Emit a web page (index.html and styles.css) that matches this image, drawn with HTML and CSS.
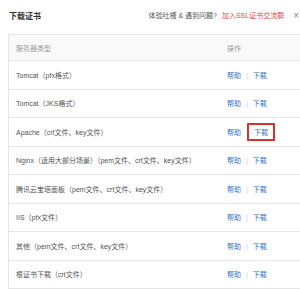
FILE: index.html
```html
<!DOCTYPE html>
<html lang="zh-CN">
<head>
  <meta charset="UTF-8" />
  <meta name="viewport" content="width=device-width, initial-scale=1.0" />
  <title>下载证书</title>
  <link rel="stylesheet" href="styles.css">
</head>
<body>

  <!-- 弹窗标题栏 -->
  <div class="dialog-head">
    <h2>下载证书</h2>
    <div class="feedback">
      <span>体验吐槽 &amp; 遇到问题?</span>
      <a class="join" href="#">加入SSL证书交流群</a>
    </div>
    <span class="close">×</span>
  </div>

  <!-- 证书下载列表 -->
  <table class="cert-table">
    <thead>
      <tr>
        <th>服务器类型</th>
        <th class="op">操作</th>
      </tr>
    </thead>
    <tbody>
      <tr><td>Tomcat（pfx格式）</td><td class="op"><a href="#">帮助</a><i>|</i><a href="#">下载</a></td></tr>
      <tr><td>Tomcat（JKS格式）</td><td class="op"><a href="#">帮助</a><i>|</i><a href="#">下载</a></td></tr>
      <tr><td>Apache（crt文件、key文件）</td><td class="op"><a href="#">帮助</a><a class="mark" href="#">下载</a></td></tr>
      <tr><td>Nginx（适用大部分场景）（pem文件、crt文件、key文件）</td><td class="op"><a href="#">帮助</a><i>|</i><a href="#">下载</a></td></tr>
      <tr><td>腾讯云宝塔面板（pem文件、crt文件、key文件）</td><td class="op"><a href="#">帮助</a><i>|</i><a href="#">下载</a></td></tr>
      <tr><td>IIS（pfx文件）</td><td class="op"><a href="#">帮助</a><i>|</i><a href="#">下载</a></td></tr>
      <tr><td>其他（pem文件、crt文件、key文件）</td><td class="op"><a href="#">帮助</a><i>|</i><a href="#">下载</a></td></tr>
      <tr><td>根证书下载（crt文件）</td><td class="op"><a href="#">帮助</a><i>|</i><a href="#">下载</a></td></tr>
    </tbody>
  </table>

</body>
</html>
```

FILE: styles.css
```css
* {
  box-sizing: border-box;
}

body {
  margin: 0;
  padding: 0;
  width: 300px;
  overflow: hidden;
  font-family: "Liberation Sans", "Noto Sans CJK SC", sans-serif;
  font-size: 7px;
  color: #555;
  background: #fff;
}

a {
  text-decoration: none;
}

.dialog-head {
  display: flex;
  align-items: center;
  height: 34px;
  padding: 0 1px 4px 9px;
}

.dialog-head h2 {
  margin: 0;
  font-size: 8px;
  font-weight: bold;
  color: #333;
}

.feedback {
  margin-left: auto;
  color: #555;
}

.feedback .join {
  margin-left: 3px;
  color: #e2464a;
}

.close {
  margin-left: 9px;
  font-size: 10px;
  color: #888;
}

.cert-table {
  width: 300px;
  margin-left: 8px;
  border-collapse: collapse;
  border-left: 1px solid #e6e6e6;
}

.cert-table th,
.cert-table td {
  text-align: left;
  font-weight: normal;
  padding: 0 0 0 7px;
  border-top: 1px solid #e6e6e6;
  border-bottom: 1px solid #e6e6e6;
  white-space: nowrap;
}

.cert-table th {
  height: 26px;
  color: #999;
  background: #f9f9f9;
}

.cert-table td {
  height: 28.5px;
}

.cert-table .op {
  width: 88px;
  padding-left: 7px;
}

.op a {
  color: #3573c6;
}

.op i {
  font-style: normal;
  color: #ccc;
  margin: 0 5px;
}

.op .mark {
  display: inline-block;
  margin-left: 6px;
  padding: 2px 5px;
  border: 2px solid #d9302f;
  border-radius: 1px;
}
```
